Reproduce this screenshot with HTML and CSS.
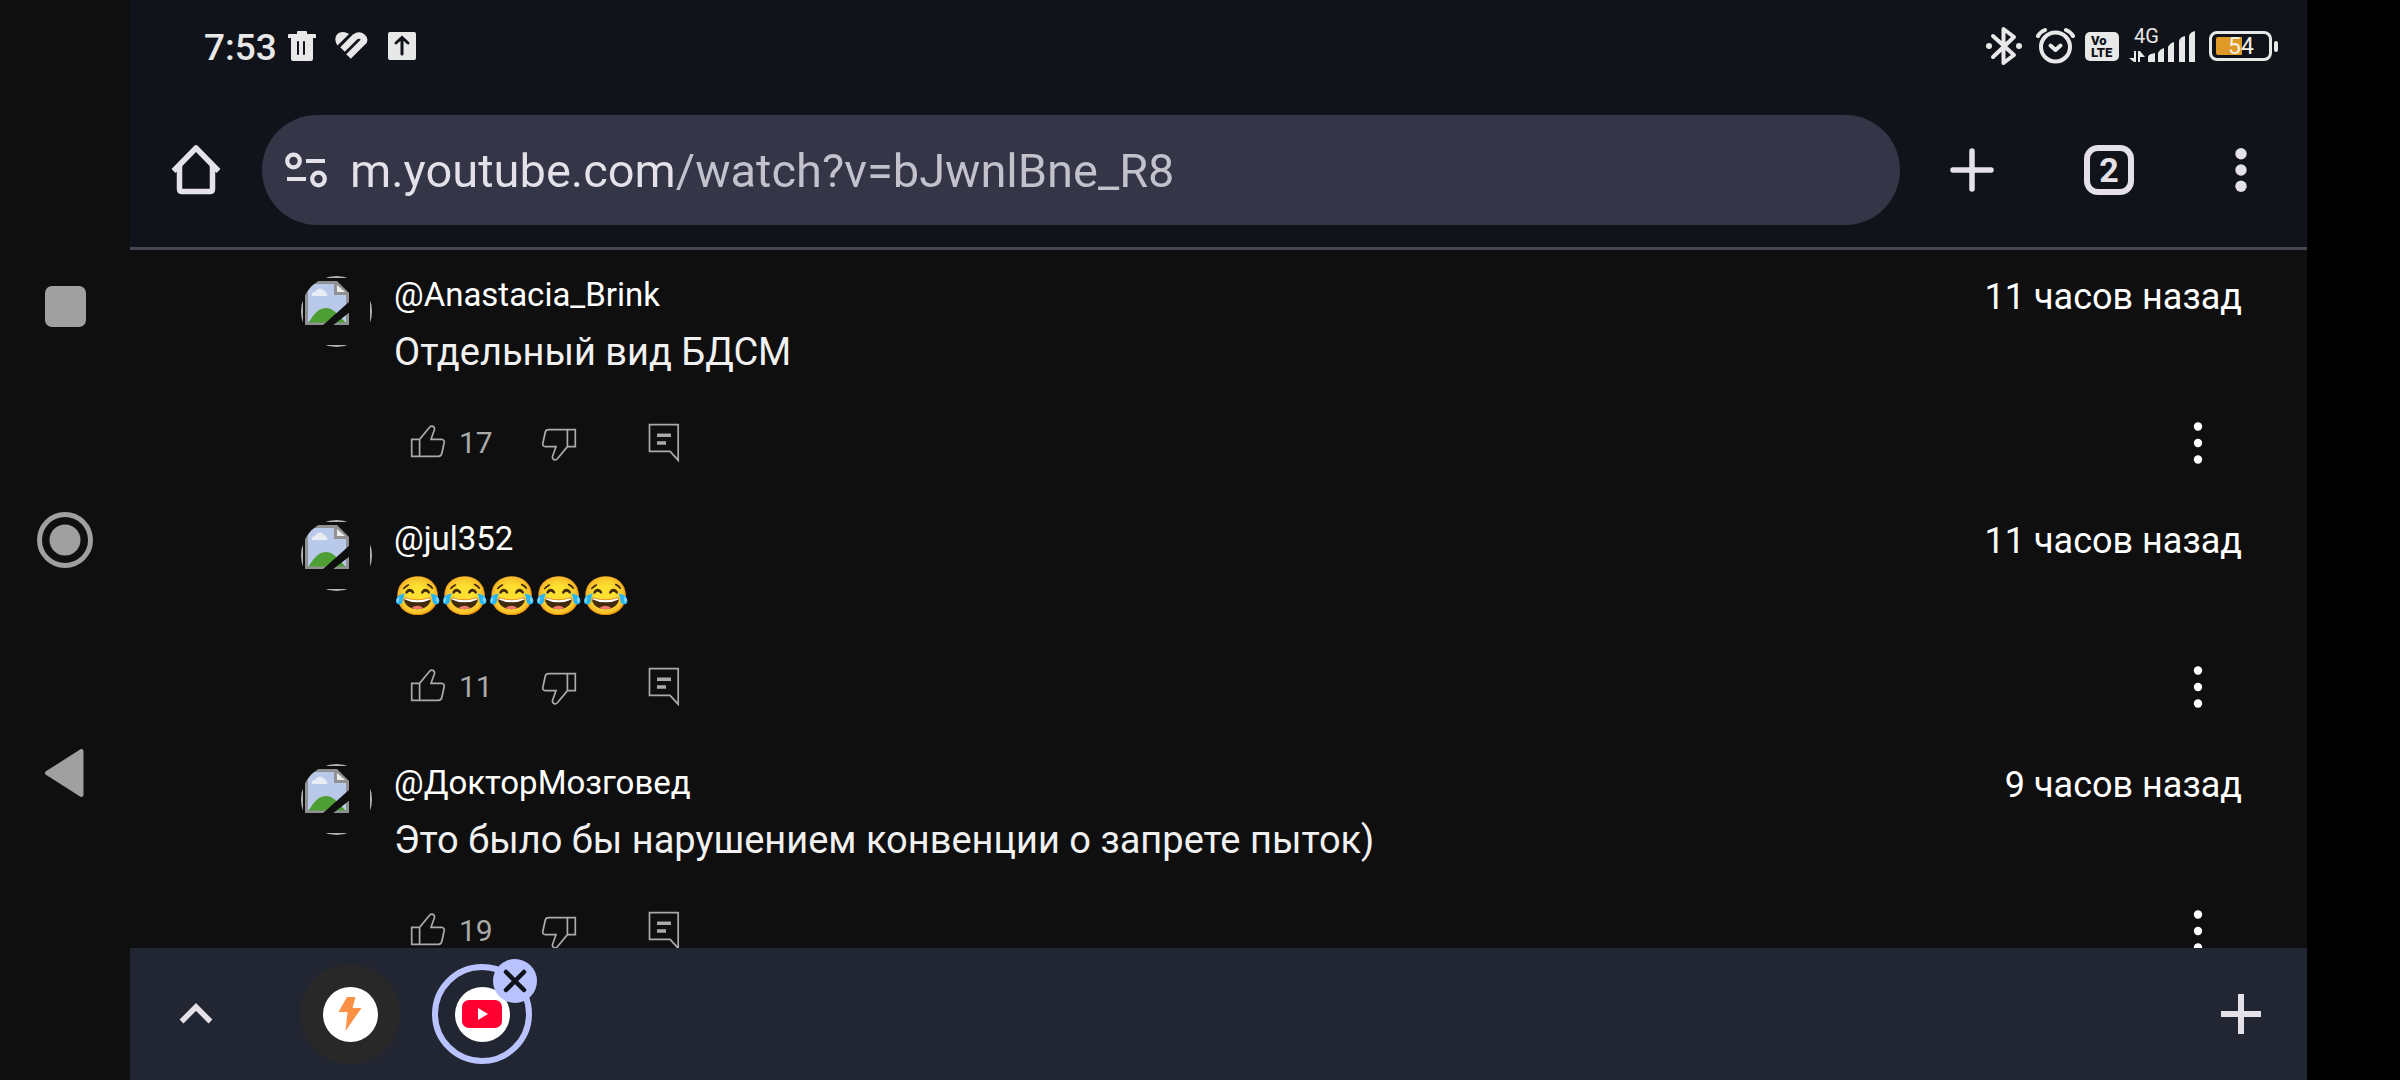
FILE: index.html
```html
<!DOCTYPE html>
<html lang="ru">
<head>
    <meta charset="UTF-8">
    <meta name="viewport" content="width=device-width, initial-scale=1.0">
    <title>YouTube</title>
    <link rel="stylesheet" href="styles.css">
</head>
<body>
    <!-- Shared icons -->
    <svg class="sprite" aria-hidden="true">
        <clipPath id="avatar-clip"><circle cx="35.5" cy="35.5" r="35.5"/></clipPath>
        <symbol id="avatar" viewBox="0 0 71 71">
            <g clip-path="url(#avatar-clip)">
                <rect x="1" y="1" width="69" height="69" fill="none" stroke="#b4b4b4" stroke-width="2"/>
                <path d="M4 5H36L48 17V49H4Z" fill="#919193"/>
                <path d="M7 8H33V19H45V46H7Z" fill="#b9c9e9"/>
                <path d="M36 9V16H44Z" fill="#ececec"/>
                <path d="M11 20a3 3 0 0 1 3-4 5 5 0 0 1 9-1c2 0 2 2 2 2a2 2 0 0 1 1 3Z" fill="#e9edf3"/>
                <path d="M8 46C14 36 19 32 25 32S35 36 44 46V46.500H8Z" fill="#4e9f33"/>
                <path d="M49 25L21 50H31L49 36Z" fill="#0f0f0f"/>
            </g>
        </symbol>
        <symbol id="thumb" viewBox="0 0 36 36">
            <path d="M1.700 14.300H9.600L19.800 2C21.500 0.300 25 1.200 24.500 4.500L21 14.300H31.500Q34.600 14.600 34.200 17.500L31.800 28.500Q31.200 31.300 28.500 31.300H1.700ZM9.600 14.300V31.300" fill="none" stroke="#aaa" stroke-width="1.700"/>
        </symbol>
        <symbol id="reply" viewBox="0 0 36 40">
            <path d="M3.500 1.700H32.200V37.200L24 28.300H3.500Z" fill="none" stroke="#aaa" stroke-width="1.700"/>
            <path d="M11 12.300H25M11 20H20" stroke="#aaa" stroke-width="3.400"/>
        </symbol>
        <symbol id="dots" viewBox="0 0 12 44">
            <circle cx="6" cy="5.500" r="4.200"/>
            <circle cx="6" cy="22" r="4.200"/>
            <circle cx="6" cy="38.500" r="4.200"/>
        </symbol>
    </svg>

    <nav class="system-nav">
        <button class="system-button" aria-label="Недавние">
            <svg width="56" height="56" viewBox="0 0 56 56"><rect x="8" y="7" width="41" height="41" rx="7"/></svg>
        </button>
        <button class="system-button" aria-label="Домой">
            <svg width="56" height="56" viewBox="0 0 56 56"><circle cx="28" cy="28" r="25.500" fill="none" stroke="#a0a0a0" stroke-width="5"/><circle cx="28" cy="28" r="15.500"/></svg>
        </button>
        <button class="system-button" aria-label="Назад">
            <svg width="56" height="56" viewBox="0 0 56 56"><path d="M10 28L44.500 6V50Z" stroke="#a0a0a0" stroke-width="4" stroke-linejoin="round"/></svg>
        </button>
    </nav>

    <div class="browser">
        <header class="header">
            <div class="status-bar">
                <span class="time">7:53</span>
                <div class="notifications">
                    <svg width="28" height="30" viewBox="0 0 28 30"><path d="M10 0h8q1 0 1 1v2h8q1 0 1 1v3H0V4q0-1 1-1h8V1q0-1 1-1zM3 7h22v21q0 2-2 2H5q-2 0-2-2zM9 11v12q0 1 1 1t1-1V11q0-1-1-1t-1 1zM15 11v12q0 1 1 1t1-1V11q0-1-1-1t-1 1z" fill-rule="evenodd"/></svg>
                    <svg width="34" height="30" viewBox="0 0 34 30"><path d="M2.500 14.500C-2 8 1 1 8 1c2.500 0 4.500 1 6 2Z"/><path d="M7.500 18.500L20 6Q24 3 27.500 6T27.500 11.500L13.500 25.500" fill="none" stroke="#e8e8e8" stroke-width="6.500"/></svg>
                    <svg width="28" height="30" viewBox="0 0 28 30"><rect y="1" width="28" height="28" rx="2"/><path d="M14 23V7M8 12L14 6.500 20 12" fill="none" stroke="#11131b" stroke-width="3" stroke-linecap="round"/></svg>
                </div>
                <div class="indicators">
                    <svg width="40" height="46" viewBox="0 -3 40 46"><path d="M9 10L30 29 19.500 37V3L30 11 9 31" fill="none" stroke="#e8e8e8" stroke-width="4" stroke-linejoin="round" stroke-linecap="round"/><circle cx="5" cy="20" r="3"/><circle cx="35" cy="20" r="3"/></svg>
                    <svg width="41" height="46" viewBox="0 -3 41 46" fill="none" stroke="#e8e8e8" stroke-linecap="round"><circle cx="21.500" cy="21" r="14.500" stroke-width="4"/><path d="M16.500 19.500L21.500 24 26.500 19.500" stroke-width="4" stroke-linejoin="round"/><path d="M4 10Q6 6 11 4M39 10Q37 6 32 4" stroke-width="4"/></svg>
                    <svg width="34" height="46" viewBox="0 -3 34 46"><rect y="6" width="34" height="29" rx="5"/><text class="volte" x="6" y="19">Vo</text><text class="volte" x="6" y="31">LTE</text></svg>
                    <svg width="68" height="46" viewBox="0 -3 68 46"><text class="network" x="5" y="17">4G</text><path d="M19 31q0-3 7-4v9h-7zM29 27q2-4 6-5v14h-6zM39 21q2-4 6-5v20h-6zM50 15q1-4 6-5v26h-6zM60 10q1-4 6-5v31h-6z"/><path d="M7 25h-2v7H0l5 4h2zM9 36h2v-5h5l-5-6H9z"/></svg>
                    <svg width="72" height="46" viewBox="0 -3 72 46"><rect x="3.500" y="6.500" width="60" height="27" rx="6.500" fill="none" stroke="#e8e8e8" stroke-width="3"/><rect x="67" y="15" width="4" height="11" rx="2"/><path d="M11 11H35V29H11Q9 29 9 27V13Q9 11 11 11Z" fill="#df9927"/><text class="battery" x="21" y="28">54</text></svg>
                </div>
            </div>

            <div class="toolbar">
                <button class="icon-button" aria-label="Главная">
                    <svg width="52" height="52" viewBox="0 0 52 52"><path d="M3.500 27L26 4 48.500 27M9.500 22V45Q9.500 47.500 12 47.500H40Q42.500 47.500 42.500 45V22" fill="none" stroke="#e4e1e9" stroke-width="5.500" stroke-linejoin="round"/></svg>
                </button>
                <div class="address-bar">
                    <button class="site-info" aria-label="Сведения о сайте">
                        <svg width="44" height="40" viewBox="0 0 44 40" fill="none" stroke="#e4e1e9" stroke-width="4.200"><circle cx="9.500" cy="11" r="6.300"/><path d="M22 11H41M3 29H22"/><circle cx="34.500" cy="29" r="6.300"/></svg>
                    </button>
                    <input class="url" type="text" aria-label="Адрес" value="m.youtube.com/watch?v=bJwnlBne_R8">
                </div>
                <button class="icon-button new-tab" aria-label="Новая вкладка">
                    <svg width="44" height="44" viewBox="0 0 44 44"><path d="M22 3V41M3 22H41" stroke="#e4e1e9" stroke-width="5.500" stroke-linecap="round"/></svg>
                </button>
                <button class="icon-button" aria-label="Вкладки"><span class="tab-count">2</span></button>
                <button class="icon-button" aria-label="Меню">
                    <svg width="12" height="44" viewBox="0 0 12 44"><circle cx="6" cy="5.700" r="5.700"/><circle cx="6" cy="22" r="5.700"/><circle cx="6" cy="38.300" r="5.700"/></svg>
                </button>
            </div>
        </header>

        <main class="comments">
            <article class="comment">
                <svg class="avatar"><use href="#avatar"/></svg>
                <div class="comment-body">
                    <div class="comment-head">
                        <a class="author" href="#">@Anastacia_Brink</a>
                        <span class="date">11 часов назад</span>
                    </div>
                    <p class="comment-text">Отдельный вид БДСМ</p>
                    <div class="actions">
                        <button class="like"><svg class="thumb"><use href="#thumb"/></svg>17</button>
                        <button class="dislike" aria-label="Не нравится"><svg class="thumb down"><use href="#thumb"/></svg></button>
                        <button class="reply" aria-label="Ответить"><svg class="reply-icon"><use href="#reply"/></svg></button>
                        <button class="more" aria-label="Ещё"><svg class="dots"><use href="#dots"/></svg></button>
                    </div>
                </div>
            </article>
            <article class="comment">
                <svg class="avatar"><use href="#avatar"/></svg>
                <div class="comment-body">
                    <div class="comment-head">
                        <a class="author" href="#">@jul352</a>
                        <span class="date">11 часов назад</span>
                    </div>
                    <p class="comment-text">😂😂😂😂😂</p>
                    <div class="actions">
                        <button class="like"><svg class="thumb"><use href="#thumb"/></svg>11</button>
                        <button class="dislike" aria-label="Не нравится"><svg class="thumb down"><use href="#thumb"/></svg></button>
                        <button class="reply" aria-label="Ответить"><svg class="reply-icon"><use href="#reply"/></svg></button>
                        <button class="more" aria-label="Ещё"><svg class="dots"><use href="#dots"/></svg></button>
                    </div>
                </div>
            </article>
            <article class="comment">
                <svg class="avatar"><use href="#avatar"/></svg>
                <div class="comment-body">
                    <div class="comment-head">
                        <a class="author" href="#">@ДокторМозговед</a>
                        <span class="date">9 часов назад</span>
                    </div>
                    <p class="comment-text">Это было бы нарушением конвенции о запрете пыток)</p>
                    <div class="actions">
                        <button class="like"><svg class="thumb"><use href="#thumb"/></svg>19</button>
                        <button class="dislike" aria-label="Не нравится"><svg class="thumb down"><use href="#thumb"/></svg></button>
                        <button class="reply" aria-label="Ответить"><svg class="reply-icon"><use href="#reply"/></svg></button>
                        <button class="more" aria-label="Ещё"><svg class="dots"><use href="#dots"/></svg></button>
                    </div>
                </div>
            </article>
        </main>

        <footer class="tab-strip">
            <button class="icon-button" aria-label="Развернуть">
                <svg width="36" height="24" viewBox="0 0 36 24"><path d="M3.500 19.500L18 5 32.500 19.500" fill="none" stroke="#e4e1e9" stroke-width="5.500"/></svg>
            </button>
            <div class="tabs">
                <button class="tab" aria-label="Вкладка 1">
                    <span class="favicon">
                        <svg width="24" height="36" viewBox="0 0 24 36"><path d="M9 1H17.500L14.500 12H23.500L7.500 35 9.500 16H0.500Z" fill="#fb9144"/></svg>
                    </span>
                </button>
                <div class="tab-holder">
                    <button class="tab active" aria-label="YouTube">
                        <span class="favicon">
                            <svg width="40" height="28" viewBox="0 0 40 28"><rect width="40" height="28" rx="7" fill="#ff0033"/><path d="M16 8L26 14 16 20Z" fill="#fff"/></svg>
                        </span>
                    </button>
                    <button class="close" aria-label="Закрыть">
                        <svg width="24" height="24" viewBox="0 0 24 24"><path d="M3 3L21 21M21 3L3 21" stroke="#11131b" stroke-width="4.500" stroke-linecap="round"/></svg>
                    </button>
                </div>
            </div>
            <button class="icon-button" aria-label="Добавить вкладку">
                <svg width="40" height="40" viewBox="0 0 40 40"><path d="M20 0V40M0 20H40" stroke="#e4e1e9" stroke-width="6"/></svg>
            </button>
        </footer>
    </div>
</body>
</html>
```
FILE: styles.css
```css
* {
    box-sizing: border-box;
}
body {
    margin: 0;
    height: 100vh;
    display: flex;
    padding-right: 93px;
    background-color: #000;
    color: #f1f1f1;
    font-family: Roboto, sans-serif;
    overflow: hidden;
}
button {
    display: flex;
    align-items: center;
    justify-content: center;
    padding: 0;
    border: none;
    background: none;
    color: inherit;
    font-family: inherit;
    cursor: pointer;
}
svg {
    display: block;
    flex: none;
}
.sprite {
    position: absolute;
    width: 0;
    height: 0;
}

/* Android navigation */
.system-nav {
    flex: none;
    width: 130px;
    display: flex;
    flex-direction: column;
    justify-content: center;
    gap: 121px;
    background-color: #0f0f0f;
    fill: #a0a0a0;
}
.system-button {
    height: 112px;
}

.browser {
    flex: 1;
    min-width: 0;
    display: flex;
    flex-direction: column;
    background-color: #0f0f0f;
}

/* Status bar and toolbar */
.header {
    background-color: #11131b;
    border-bottom: 3px solid #464652;
}
.status-bar {
    height: 92px;
    display: flex;
    align-items: center;
    padding: 0 28px 0 74px;
    color: #e8e8e8;
    fill: #e8e8e8;
}
.time {
    font-size: 37px;
    font-weight: 500;
    line-height: 44px;
    margin-top: 4px;
}
.notifications {
    display: flex;
    gap: 19px;
    margin-left: 11px;
}
.indicators {
    display: flex;
    gap: 10px;
    margin-left: auto;
}
.volte {
    font-size: 13px;
    font-weight: 900;
    fill: #11131b;
}
.network {
    font-size: 20px;
}
.battery {
    font-size: 23px;
    fill: #f4efe4;
}
.toolbar {
    display: flex;
    align-items: center;
    padding: 23px 0 22px;
    color: #e4e1e9;
    fill: #e4e1e9;
}
.icon-button {
    flex: none;
    width: 132px;
    height: 110px;
}
.new-tab {
    width: 143px;
}
.address-bar {
    flex: 1;
    display: flex;
    align-items: center;
    height: 110px;
    padding: 0 40px 0 22px;
    border-radius: 55px;
    background-color: #343648;
}
.url {
    flex: 1;
    min-width: 0;
    height: 64px;
    margin-left: 22px;
    padding: 0;
    border: none;
    outline: none;
    font-family: inherit;
    font-size: 47px;
    color: transparent;
    /* host is brighter than the path */
    background: linear-gradient(90deg, #e4e1e9 325px, #c3c1cc 325px);
    -webkit-background-clip: text;
    background-clip: text;
}
.tab-count {
    width: 50px;
    height: 50px;
    border: 6px solid #e4e1e9;
    border-radius: 14px;
    font-size: 34px;
    font-weight: 700;
    line-height: 38px;
    text-align: center;
}

/* Comments */
.comments {
    flex: 1;
    min-height: 0;
    overflow: hidden;
    display: flex;
    flex-direction: column;
    gap: 49px;
    padding: 26px 65px 0 171px;
}
.comment {
    flex: none;
    display: flex;
    gap: 22px;
}
.avatar {
    width: 71px;
    height: 71px;
}
.comment-body {
    flex: 1;
}
.comment-head {
    display: flex;
    justify-content: space-between;
    height: 38px;
    color: #fff;
}
.author {
    font-size: 33px;
    line-height: 38px;
    color: #fff;
    text-decoration: none;
}
.date {
    font-size: 36px;
    line-height: 42px;
}
.comment-text {
    margin: 15px 0 40px;
    font-size: 38px;
    line-height: 46px;
}
.actions {
    display: flex;
    align-items: center;
    height: 56px;
    padding-left: 16px;
    color: #aaa;
}
.like {
    gap: 13px;
    font-size: 30px;
    line-height: 36px;
}
.thumb {
    width: 36px;
    height: 36px;
}
.down {
    transform: rotate(180deg);
}
.dislike {
    margin-left: 48px;
}
.reply {
    margin-left: 69px;
}
.reply-icon {
    width: 36px;
    height: 40px;
}
.more {
    width: 88px;
    height: 56px;
    margin-left: auto;
    fill: #fff;
}
.dots {
    width: 12px;
    height: 44px;
}

/* Tab strip */
.tab-strip {
    flex: none;
    display: flex;
    align-items: center;
    height: 132px;
    background-color: #222632;
}
.tabs {
    flex: 1;
    display: flex;
    gap: 32px;
    padding-left: 38px;
}
.tab {
    width: 100px;
    height: 100px;
    border-radius: 50%;
    background-color: #282828;
}
.tab.active {
    border: 6px solid #b8c3ff;
    background: none;
}
.favicon {
    display: flex;
    align-items: center;
    justify-content: center;
    width: 55px;
    height: 55px;
    border-radius: 50%;
    background-color: #fff;
}
.tab-holder {
    position: relative;
}
.close {
    position: absolute;
    top: -5px;
    right: -5px;
    width: 44px;
    height: 44px;
    border-radius: 50%;
    background-color: #b8c3ff;
}
```
